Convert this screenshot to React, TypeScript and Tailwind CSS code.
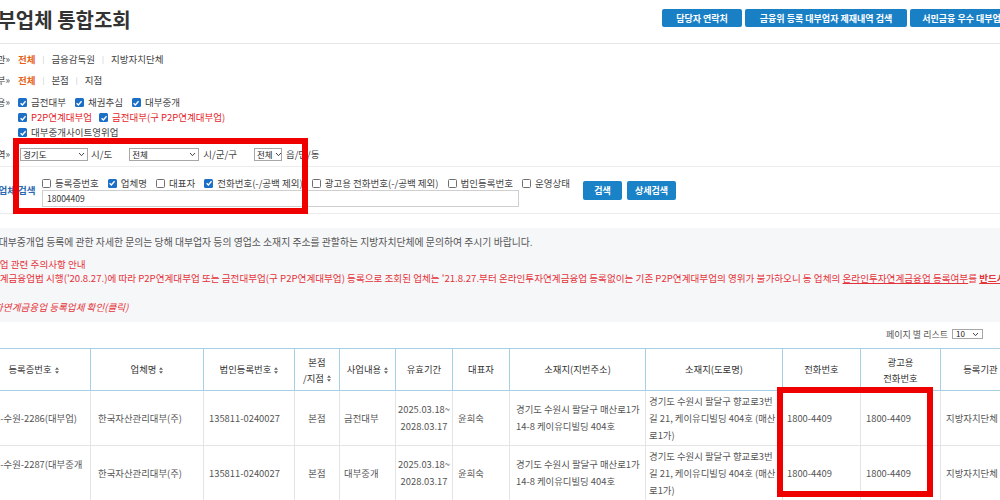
import React from "react";

function Box({ checked }: { checked?: boolean }) {
  if (checked) {
    return (
      <span className="inline-flex h-[9px] w-[9px] shrink-0 items-center justify-center rounded-[1.5px] bg-[#1b6fc6]">
        <svg viewBox="0 0 10 10" className="h-[8px] w-[8px]">
          <path d="M2 5.2 4.2 7.4 8.2 2.8" fill="none" stroke="#fff" strokeWidth="1.7" />
        </svg>
      </span>
    );
  }
  return <span className="inline-block h-[9px] w-[9px] shrink-0 rounded-[1.5px] border border-[#6f6f6f] bg-white" />;
}

function Check({ checked, red, children }: { checked?: boolean; red?: boolean; children: React.ReactNode }) {
  return (
    <span className={`flex items-center gap-[4px] whitespace-nowrap ${red ? "text-[#e5262c]" : "text-[#444]"}`}>
      <Box checked={checked} />
      {children}
    </span>
  );
}

function Chevron() {
  return (
    <svg viewBox="0 0 8 6" className="h-[5px] w-[7px] shrink-0">
      <path d="M1 1.2 4 4.4 7 1.2" fill="none" stroke="#333" strokeWidth="1.1" />
    </svg>
  );
}

function Select({ value, w }: { value: string; w: string }) {
  return (
    <div className={`flex h-[13px] ${w} shrink-0 items-center justify-between gap-[2px] whitespace-nowrap border border-[#a7a7a7] bg-white px-[2px] text-[8.5px] leading-none text-[#222]`}>
      <span>{value}</span>
      <Chevron />
    </div>
  );
}

function Sort() {
  return (
    <svg viewBox="0 0 5 8" className="ml-[3px] inline-block h-[7px] w-[4px] align-[-0.5px]">
      <path d="M2.5 0 5 3 0 3Z M0 5 5 5 2.5 8Z" fill="#666" />
    </svg>
  );
}

function Sep() {
  return <span className="mx-[7px] text-[7px] text-[#bbb]">|</span>;
}

function Label({ children }: { children: React.ReactNode }) {
  return (
    <div className="-ml-[50px] w-[68px] shrink-0 whitespace-nowrap pr-[8px] text-right text-[#444]">
      {children}»
    </div>
  );
}

const rows = [
  {
    reg: "경기-수원-2286(대부업)",
    name: "한국자산관리대부(주)",
    corp: "135811-0240027",
    branch: "본점",
    biz: "금전대부",
    from: "2025.03.18~",
    to: "2028.03.17",
    ceo: "윤희숙",
    addr1: "경기도 수원시 팔달구 매산로1가 14-8 케이유디빌딩 404호",
    addr2: "경기도 수원시 팔달구 향교로3번길 21, 케이유디빌딩 404호 (매산로1가)",
    tel: "1800-4409",
    adTel: "1800-4409",
    org: "지방자치단체",
  },
  {
    reg: "경기-수원-2287(대부중개업)",
    name: "한국자산관리대부(주)",
    corp: "135811-0240027",
    branch: "본점",
    biz: "대부중개",
    from: "2025.03.18~",
    to: "2028.03.17",
    ceo: "윤희숙",
    addr1: "경기도 수원시 팔달구 매산로1가 14-8 케이유디빌딩 404호",
    addr2: "경기도 수원시 팔달구 향교로3번길 21, 케이유디빌딩 404호 (매산로1가)",
    tel: "1800-4409",
    adTel: "1800-4409",
    org: "지방자치단체",
  },
];

const th = "border border-[#a6cfe6] px-[2px] text-center align-middle font-normal text-[#333]";
const td = "border-x border-b border-[#e4e4e4] align-middle";

export default function App() {
  return (
    <div className="relative h-[500px] w-[1000px] overflow-hidden bg-white font-['Noto_Sans_CJK_KR','Noto_Sans',sans-serif] text-[9.5px] leading-[15px]">
      {/* title bar */}
      <div className="flex h-[44px] items-start border-b border-[#e6e6e6]">
        <h1 className="-ml-[21px] w-[683px] shrink-0 whitespace-nowrap pt-[7px] text-[20px] font-bold leading-[26px] text-[#333]">
          대부업체 통합조회
        </h1>
        <div className="flex shrink-0 gap-[3px] pt-[9px]">
          {["담당자 연락처", "금융위 등록 대부업자 제재내역 검색", "서민금융 우수 대부업자 조회"].map((b, i) => (
            <div
              key={b}
              className={`flex h-[18px] shrink-0 items-center justify-center rounded-[2px] bg-[#1a80c6] text-[9px] font-bold text-white ${
                i === 0 ? "w-[80px]" : i === 1 ? "w-[162px]" : "w-[130px]"
              }`}
            >
              {b}
            </div>
          ))}
        </div>
      </div>

      {/* filters */}
      <div className="pt-[4px]">
        <div className="flex h-[22px] items-center">
          <Label>등록기관</Label>
          <span className="font-bold text-[#e5621c]">전체</span>
          <Sep />
          <span className="text-[#444]">금융감독원</span>
          <Sep />
          <span className="text-[#444]">지방자치단체</span>
        </div>
        <div className="flex h-[21px] items-center">
          <Label>본점여부</Label>
          <span className="font-bold text-[#e5621c]">전체</span>
          <Sep />
          <span className="text-[#444]">본점</span>
          <Sep />
          <span className="text-[#444]">지점</span>
        </div>
        <div className="flex pt-[4px]">
          <Label>사업내용</Label>
          <div className="flex flex-col">
            <div className="flex h-[15px] items-center gap-[9px]">
              <Check checked>금전대부</Check>
              <Check checked>채권추심</Check>
              <Check checked>대부중개</Check>
            </div>
            <div className="flex h-[15px] items-center gap-[7px]">
              <Check checked red>
                P2P연계대부업
              </Check>
              <Check checked red>
                금전대부(구 P2P연계대부업)
              </Check>
            </div>
            <div className="flex h-[15px] items-center">
              <Check checked>대부중개사이트영위업</Check>
            </div>
          </div>
        </div>
        <div className="mt-[2px] flex h-[24px] items-center">
          <Label>소재지역</Label>
          <div className="ml-[2px] flex items-center">
            <Select value="경기도" w="w-[68px]" />
            <span className="ml-[3px] text-[#444]">시/도</span>
            <div className="ml-[17px]">
              <Select value="전체" w="w-[70px]" />
            </div>
            <span className="ml-[4px] text-[#444]">시/군/구</span>
            <div className="ml-[17px]">
              <Select value="전체" w="w-[28px]" />
            </div>
            <span className="ml-[4px] text-[#444]">읍/면/동</span>
          </div>
        </div>
        <div className="flex h-[48px] items-center border-y border-[#ececec]">
          <div className="-ml-[50px] w-[92px] shrink-0 whitespace-nowrap pl-[31px] font-bold text-[#2a69b1]">대부업체 검색</div>
          <div className="flex w-[530px] shrink-0 flex-col pt-[3px]">
            <div className="flex h-[14px] items-center gap-[9px]">
              <Check>등록증번호</Check>
              <Check checked>업체명</Check>
              <Check>대표자</Check>
              <Check checked>전화번호(-/공백 제외)</Check>
              <Check>광고용 전화번호(-/공백 제외)</Check>
              <Check>법인등록번호</Check>
              <Check>운영상태</Check>
            </div>
            <div className="flex h-[17px] w-[477px] items-center border border-[#cfcfcf] px-[4px] text-[8.5px] text-[#333]">
              18004409
            </div>
          </div>
          <div className="ml-[11px] flex gap-[5px]">
            <div className="flex h-[19px] w-[39px] items-center justify-center rounded-[2px] bg-[#1a82c7] text-[9px] font-bold text-white">검색</div>
            <div className="flex h-[19px] w-[49px] items-center justify-center rounded-[2px] bg-[#1a82c7] text-[9px] font-bold text-white">상세검색</div>
          </div>
        </div>
      </div>

      {/* notice */}
      <div className="mt-[14px] bg-[#f6f7f9] pb-[8px] pt-[7px] text-[9.6px] leading-[14px]">
        <div className="-ml-[53px] whitespace-nowrap">
          <p className="-ml-[1px] text-[9.85px] text-[#555]">
            ※ 대부업 및 대부중개업 등록에 관한 자세한 문의는 당해 대부업자 등의 영업소 소재지 주소를 관할하는 지방자치단체에 문의하여 주시기 바랍니다.
          </p>
          <p className="mt-[8px] text-[#e4343a]">P2P연계대부업 관련 주의사항 안내</p>
          <p className="-ml-[12px] text-[#e4343a]">
            ※ 온라인투자연계금융업법 시행('20.8.27.)에 따라 P2P연계대부업 또는 금전대부업(구 P2P연계대부업) 등록으로 조회된 업체는 '21.8.27.부터
            온라인투자연계금융업 등록없이는 기존 P2P연계대부업의 영위가 불가하오니 동 업체의{" "}
            <span className="underline">온라인투자연계금융업 등록여부</span>를 <b className="underline">반드시 확인</b>하시기 바랍니다.
          </p>
          <p className="mt-[15px] italic text-[#e4343a]">→ 온라인투자연계금융업 등록업체 확인(클릭)</p>
        </div>
      </div>

      {/* page size */}
      <div className="mt-[4px] flex h-[16px] items-center justify-end pr-[17px] text-[9px] text-[#555]">
        <span>페이지 별 리스트</span>
        <div className="ml-[4px] flex h-[10px] w-[31px] items-center justify-between border border-[#a7a7a7] px-[3px] text-[8px] leading-none text-[#222]">
          <span>10</span>
          <Chevron />
        </div>
      </div>

      {/* table */}
      <table className="-ml-[24px] mt-[6px] w-[1044px] table-fixed border-collapse text-[9.4px] leading-[17px]">
        <colgroup>
          {[114, 113, 91, 45, 56, 57, 57, 136, 137, 78, 80, 80].map((w, i) => (
            <col key={i} style={{ width: w }} />
          ))}
        </colgroup>
        <thead>
          <tr className="h-[42px] border-t-[1.5px] border-[#7db6da]">
            <th className={th}>
              등록증번호
              <Sort />
            </th>
            <th className={th}>
              업체명
              <Sort />
            </th>
            <th className={th}>
              법인등록번호
              <Sort />
            </th>
            <th className={`${th} leading-[16px]`}>
              본점
              <br />
              /지점
              <Sort />
            </th>
            <th className={th}>
              사업내용
              <Sort />
            </th>
            <th className={th}>유효기간</th>
            <th className={th}>대표자</th>
            <th className={th}>소재지(지번주소)</th>
            <th className={th}>소재지(도로명)</th>
            <th className={th}>전화번호</th>
            <th className={`${th} leading-[16px]`}>
              광고용
              <br />
              전화번호
            </th>
            <th className={th}>등록기관</th>
          </tr>
        </thead>
        <tbody className="text-[#555]">
          {rows.map((r, i) => (
            <tr key={i} className="h-[55px]">
              <td className={`${td} break-all pl-[6px] pr-[4px]`}>{r.reg}</td>
              <td className={`${td} pl-[7px]`}>{r.name}</td>
              <td className={`${td} pl-[5px]`}>{r.corp}</td>
              <td className={`${td} text-center`}>{r.branch}</td>
              <td className={`${td} pl-[4px]`}>{r.biz}</td>
              <td className={`${td} text-center`}>
                {r.from}
                <br />
                {r.to}
              </td>
              <td className={`${td} pl-[5px]`}>{r.ceo}</td>
              <td className={`${td} pl-[6px] pr-[2px]`}>{r.addr1}</td>
              <td className={`${td} break-all pl-[3px] pr-[6px]`}>{r.addr2}</td>
              <td className={`${td} pl-[4px]`}>{r.tel}</td>
              <td className={`${td} pl-[5px]`}>{r.adTel}</td>
              <td className={`${td} pl-[5px]`}>{r.org}</td>
            </tr>
          ))}
        </tbody>
      </table>

      {/* annotation boxes */}
      <div className="absolute left-[13px] top-[138px] h-[76px] w-[295px] border-[6px] border-[#ee0000]" />
      <div className="absolute left-[777px] top-[387px] h-[110px] w-[156px] border-[6px] border-[#ee0000]" />
    </div>
  );
}
